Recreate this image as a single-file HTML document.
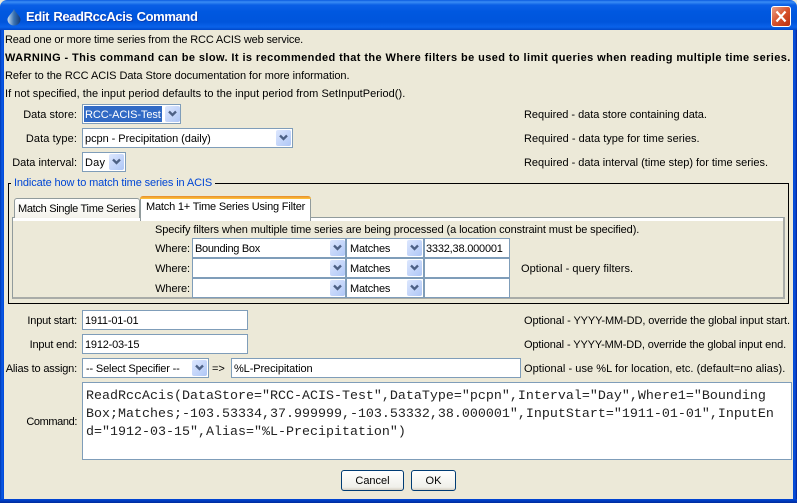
<!DOCTYPE html>
<html><head><meta charset="utf-8"><style>
html,body{margin:0;padding:0;background:#ece9d8}
#w{position:relative;width:797px;height:503px;overflow:hidden;background:#ece9d8;font:11px "Liberation Sans",sans-serif;color:#000}
#w div,#w span.t{position:absolute}
.t{position:absolute;white-space:nowrap;line-height:14px;height:14px;margin-top:1px}
.r{text-align:right}
.b{background:#fff;border:1px solid #7f9db9;box-sizing:border-box}
.a{position:absolute;width:15px;height:16px;border-radius:2px;background:linear-gradient(135deg,#dde7fe,#aec6f6)}
.a svg{position:absolute;left:3px;top:4px}
.m{margin-top:0;font:13.33px/18px 'Liberation Mono',monospace;height:18px;color:#222}
</style></head><body><div id="w">
<div style="left:0;top:0;width:797px;height:30px;border-radius:7px 7px 0 0;background:linear-gradient(180deg,#0a5ae0 0,#3a8cf5 2px,#0a5fe6 5px,#0058e0 12px,#0055dc 22px,#0a62ea 27px,#0048c8 30px)"></div>
<div style="left:0;top:30px;width:4px;height:473px;background:linear-gradient(90deg,#0037b0,#0a5ae6 50%,#0048d8)"></div>
<div style="left:793px;top:30px;width:4px;height:473px;background:linear-gradient(90deg,#0048d8,#0a4fd6 50%,#00209a)"></div>
<div style="left:0;top:499px;width:797px;height:4px;background:linear-gradient(180deg,#0048d8,#002a9c)"></div>
<svg style="position:absolute;left:7px;top:8px" width="14" height="18" viewBox="0 0 14 18"><defs><linearGradient id="g" x1="0" x2="1" y1="0" y2="0"><stop offset="0" stop-color="#c4dcf4"/><stop offset=".5" stop-color="#3a72b0"/><stop offset="1" stop-color="#123a78"/></linearGradient></defs><path d="M7 1C5.500 5 .5 8 .5 11.500a6.500 6 0 0 0 13 0C13.500 8 8.500 5 7 1Z" fill="url(#g)"/></svg>
<span class="t" style="margin-top:0;left:26px;top:9px;font:bold 13px/16px 'Liberation Sans',sans-serif;height:16px;color:#fff;letter-spacing:-.37px;word-spacing:1px;text-shadow:1px 1px 0 #0a3cb0">Edit ReadRccAcis Command</span>
<div style="left:771px;top:6px;width:20px;height:21px;box-sizing:border-box;border:1px solid #fff;border-radius:3px;background:linear-gradient(135deg,#e8a088,#d8522c 50%,#b83010)"></div>
<svg style="position:absolute;left:771px;top:6px" width="20" height="21"><path d="M5.500 5.500L14.500 15.500M14.500 5.500L5.500 15.500" stroke="#fff" stroke-width="2.200"/></svg>

<span class="t" style="left:5px;top:32px;letter-spacing:-.16px">Read one or more time series from the RCC ACIS web service.</span>
<span class="t" style="left:5px;top:50px;font-weight:bold;letter-spacing:.41px">WARNING - This command can be slow. It is recommended that the Where filters be used to limit queries when reading multiple time series.</span>
<span class="t" style="left:5px;top:68px;letter-spacing:-.05px">Refer to the RCC ACIS Data Store documentation for more information.</span>
<span class="t" style="left:5px;top:86px;letter-spacing:.04px">If not specified, the input period defaults to the input period from SetInputPeriod().</span>

<span class="t r" style="left:0;width:77px;top:107px">Data store:</span>
<div class="b" style="left:82px;top:104px;width:99px;height:20px;border-width:1px"></div>
<div style="left:84px;top:106px;width:78px;height:16px;background:#316ac5"></div>
<span class="t" style="left:85px;top:107px;color:#fff;letter-spacing:-.1px">RCC-ACIS-Test</span>
<div class="a" style="left:165px;top:106px"><svg width="9" height="8"><path d="M1 1.500L4.500 5L8 1.500" fill="none" stroke="#4d6185" stroke-width="2.300"/></svg></div>

<span class="t r" style="left:0;width:77px;top:131px;letter-spacing:.1px">Data type:</span>
<div class="b" style="left:82px;top:128px;width:211px;height:20px"></div>
<span class="t" style="left:85px;top:131px;letter-spacing:-.05px">pcpn - Precipitation (daily)</span>
<div class="a" style="left:276px;top:130px"><svg width="9" height="8"><path d="M1 1.500L4.500 5L8 1.500" fill="none" stroke="#4d6185" stroke-width="2.300"/></svg></div>

<span class="t r" style="left:0;width:77px;top:155px">Data interval:</span>
<div class="b" style="left:82px;top:152px;width:44px;height:20px"></div>
<span class="t" style="left:85px;top:155px;letter-spacing:.2px">Day</span>
<div class="a" style="left:109px;top:154px"><svg width="9" height="8"><path d="M1 1.500L4.500 5L8 1.500" fill="none" stroke="#4d6185" stroke-width="2.300"/></svg></div>

<span class="t" style="left:524px;top:107px;letter-spacing:-.03px">Required - data store containing data.</span>
<span class="t" style="left:524px;top:131px;letter-spacing:.02px">Required - data type for time series.</span>
<span class="t" style="left:524px;top:155px;letter-spacing:-.01px">Required - data interval (time step) for time series.</span>

<div style="left:8px;top:183px;width:781px;height:121px;box-sizing:border-box;border:1px solid #000"></div>
<span class="t" style="left:11px;top:175px;padding:0 3px;background:#ece9d8;color:#0046d5;letter-spacing:-.12px">Indicate how to match time series in ACIS</span>

<div style="left:12px;top:217px;width:773px;height:82px;box-sizing:border-box;border:1px solid #919b9c;border-right:2px solid #a9aca8;border-bottom:2px solid #a9aca8;background:#ece9d8"></div>
<div style="left:13px;top:218px;width:770px;height:3px;background:#fff"></div>
<div style="left:14px;top:198px;width:126px;height:20px;box-sizing:border-box;border:1px solid #919b9c;border-bottom:0;border-radius:3px 3px 0 0;background:linear-gradient(180deg,#fff,#f4f3ec)"></div>
<span class="t" style="left:18px;top:201px;letter-spacing:-.3px">Match Single Time Series</span>
<div style="left:140px;top:196px;width:171px;height:25px;box-sizing:border-box;border:1px solid #919b9c;border-bottom:0;border-top:0;border-radius:3px 3px 0 0;background:#fff"></div>
<div style="left:140px;top:196px;width:171px;height:3px;border-radius:3px 3px 0 0;background:linear-gradient(180deg,#e68b2c,#ffc73c)"></div>
<span class="t" style="left:146px;top:199px;letter-spacing:-.19px">Match 1+ Time Series Using Filter</span>

<span class="t" style="left:155px;top:222px;letter-spacing:-.1px">Specify filters when multiple time series are being processed (a location constraint must be specified).</span>

<span class="t r" style="left:100px;width:90px;top:241px;letter-spacing:-.1px">Where:</span>
<span class="t r" style="left:100px;width:90px;top:261px;letter-spacing:-.1px">Where:</span>
<span class="t r" style="left:100px;width:90px;top:281px;letter-spacing:-.1px">Where:</span>

<div class="b" style="left:192px;top:238px;width:154px;height:20px"></div>
<div class="b" style="left:192px;top:258px;width:154px;height:20px"></div>
<div class="b" style="left:192px;top:278px;width:154px;height:20px"></div>
<span class="t" style="left:195px;top:241px;letter-spacing:-.3px">Bounding Box</span>
<div class="a" style="left:330px;top:240px"><svg width="9" height="8"><path d="M1 1.500L4.500 5L8 1.500" fill="none" stroke="#4d6185" stroke-width="2.300"/></svg></div>
<div class="a" style="left:330px;top:260px"><svg width="9" height="8"><path d="M1 1.500L4.500 5L8 1.500" fill="none" stroke="#4d6185" stroke-width="2.300"/></svg></div>
<div class="a" style="left:330px;top:280px"><svg width="9" height="8"><path d="M1 1.500L4.500 5L8 1.500" fill="none" stroke="#4d6185" stroke-width="2.300"/></svg></div>

<div class="b" style="left:346px;top:238px;width:78px;height:20px"></div>
<div class="b" style="left:346px;top:258px;width:78px;height:20px"></div>
<div class="b" style="left:346px;top:278px;width:78px;height:20px"></div>
<span class="t" style="left:350px;top:241px;letter-spacing:-.2px">Matches</span>
<span class="t" style="left:350px;top:261px;letter-spacing:-.2px">Matches</span>
<span class="t" style="left:350px;top:281px;letter-spacing:-.2px">Matches</span>
<div class="a" style="left:407px;top:240px"><svg width="9" height="8"><path d="M1 1.500L4.500 5L8 1.500" fill="none" stroke="#4d6185" stroke-width="2.300"/></svg></div>
<div class="a" style="left:407px;top:260px"><svg width="9" height="8"><path d="M1 1.500L4.500 5L8 1.500" fill="none" stroke="#4d6185" stroke-width="2.300"/></svg></div>
<div class="a" style="left:407px;top:280px"><svg width="9" height="8"><path d="M1 1.500L4.500 5L8 1.500" fill="none" stroke="#4d6185" stroke-width="2.300"/></svg></div>

<div class="b" style="left:424px;top:238px;width:86px;height:20px"></div>
<div class="b" style="left:424px;top:258px;width:86px;height:20px"></div>
<div class="b" style="left:424px;top:278px;width:86px;height:20px"></div>
<span class="t" style="left:426px;top:241px;letter-spacing:-.2px">3332,38.000001</span>
<span class="t" style="left:521px;top:261px;letter-spacing:.06px">Optional - query filters.</span>

<span class="t r" style="left:0;width:77px;top:313px;letter-spacing:-.2px">Input start:</span>
<div class="b" style="left:82px;top:310px;width:166px;height:20px"></div>
<span class="t" style="left:85px;top:313px;letter-spacing:-.2px">1911-01-01</span>
<span class="t r" style="left:0;width:77px;top:337px;letter-spacing:-.15px">Input end:</span>
<div class="b" style="left:82px;top:334px;width:166px;height:20px"></div>
<span class="t" style="left:85px;top:337px;letter-spacing:-.2px">1912-03-15</span>
<span class="t r" style="left:0;width:77px;top:361px;letter-spacing:-.17px">Alias to assign:</span>
<div class="b" style="left:82px;top:358px;width:127px;height:20px"></div>
<span class="t" style="left:86px;top:361px;letter-spacing:-.16px">-- Select Specifier --</span>
<div class="a" style="left:192px;top:360px"><svg width="9" height="8"><path d="M1 1.500L4.500 5L8 1.500" fill="none" stroke="#4d6185" stroke-width="2.300"/></svg></div>
<span class="t" style="left:212px;top:361px">=&gt;</span>
<div class="b" style="left:231px;top:358px;width:290px;height:20px"></div>
<span class="t" style="left:234px;top:361px;letter-spacing:-.1px">%L-Precipitation</span>

<span class="t" style="left:524px;top:313px;letter-spacing:-.1px">Optional - YYYY-MM-DD, override the global input start.</span>
<span class="t" style="left:524px;top:337px;letter-spacing:-.12px">Optional - YYYY-MM-DD, override the global input end.</span>
<span class="t" style="left:524px;top:361px;letter-spacing:.05px">Optional - use %L for location, etc. (default=no alias).</span>

<span class="t r" style="left:0;width:77px;top:414px;letter-spacing:-.4px">Command:</span>
<div class="b" style="left:82px;top:382px;width:710px;height:78px"></div>
<span class="t m" style="left:86px;top:388px">ReadRccAcis(DataStore="RCC-ACIS-Test",DataType="pcpn",Interval="Day",Where1="Bounding</span>
<span class="t m" style="left:86px;top:406px">Box;Matches;-103.53334,37.999999,-103.53332,38.000001",InputStart="1911-01-01",InputEn</span>
<span class="t m" style="left:86px;top:424px">d="1912-03-15",Alias="%L-Precipitation")</span>

<div style="left:341px;top:470px;width:63px;height:21px;box-sizing:border-box;border:1px solid #003c74;border-radius:3px;background:linear-gradient(180deg,#fff,#f0f0ea 85%,#d6d0c5)"></div>
<span class="t r" style="left:341px;width:63px;text-align:center;top:473px">Cancel</span>
<div style="left:411px;top:470px;width:45px;height:21px;box-sizing:border-box;border:1px solid #003c74;border-radius:3px;background:linear-gradient(180deg,#fff,#f0f0ea 85%,#d6d0c5)"></div>
<span class="t r" style="left:411px;width:45px;text-align:center;top:473px">OK</span>
</div></body></html>
